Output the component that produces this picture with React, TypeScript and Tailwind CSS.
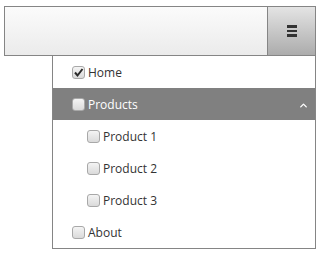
// navbar with collapsible dropdown menu
import { ChevronUp } from 'lucide-react';

interface Item {
    label: string;
    checked?: boolean;
    active?: boolean;
    nested?: boolean;
    expanded?: boolean;
}

const items: Item[] = [
    { label: 'Home', checked: true },
    { label: 'Products', active: true, expanded: true },
    { label: 'Product 1', nested: true },
    { label: 'Product 2', nested: true },
    { label: 'Product 3', nested: true },
    { label: 'About' },
];

function Check({ checked }: { checked?: boolean }) {
    return (
        <span className="relative w-[13px] h-[13px] rounded-[3px] border border-[#a8a8a8] bg-gradient-to-b from-[#f4f4f4] to-[#dadada] flex-shrink-0 -mt-[2px]">
            {checked && (
                <svg viewBox="0 0 13 13" className="absolute -left-px -top-px w-[13px] h-[13px]">
                    <path d="M3 6.5 L5.5 9.5 L10.5 3" fill="none" stroke="#2b2b2b" strokeWidth="2" />
                </svg>
            )}
        </span>
    );
}

export default function App() {
    return (
        <div className="w-[320px] h-[256px] bg-white pt-[6px] pl-[4px] font-['Open_Sans',sans-serif]">
            <div className="w-[312px] h-[50px] border border-[#858585] flex">
                <div className="flex-1 bg-gradient-to-b from-[#fbfbfb] to-[#ebebeb]" />
                <div className="w-[48px] border-l border-[#858585] bg-gradient-to-b from-[#e4e4e4] to-[#acacac] flex items-center justify-center">
                    <div className="flex flex-col gap-[2px]">
                        <span className="block w-[10px] h-[2.5px] bg-[#333]" />
                        <span className="block w-[10px] h-[2.5px] bg-[#333]" />
                        <span className="block w-[10px] h-[2.5px] bg-[#333]" />
                    </div>
                </div>
            </div>
            <div className="ml-[48px] w-[264px] border-l border-r border-b border-[#858585]">
                {items.map((it) => (
                    <div
                        key={it.label}
                        className={`h-[32px] pt-[2px] flex items-center gap-[3px] text-[12px] ${it.nested ? 'pl-[34px]' : 'pl-[19px]'} ${it.active ? 'bg-[#808080] text-white' : 'text-[#333]'}`}
                    >
                        <Check checked={it.checked} />
                        <span>{it.label}</span>
                        {it.expanded && <ChevronUp className="ml-auto mr-[6px] w-[11px] h-[11px]" strokeWidth={3} />}
                    </div>
                ))}
            </div>
        </div>
    );
}
